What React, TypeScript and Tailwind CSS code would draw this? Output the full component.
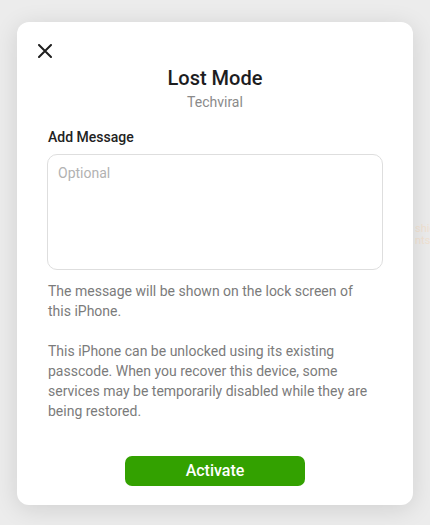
import React from "react";

export default function App() {
  return (
    <div
      className="relative h-[525px] w-[430px] overflow-hidden bg-[#ececec]"
      style={{ fontFamily: "Roboto, 'Noto Sans', sans-serif" }}
    >
      <div className="absolute left-[415px] top-[223px] text-[11px] leading-[12px] text-[#f1e2d2]">
        <div>shic</div>
        <div>nts</div>
      </div>
      <div className="relative pl-[17px] pt-[22px]">
        <div className="h-[483px] w-[396px] rounded-[12px] bg-white shadow-[0_4px_24px_rgba(0,0,0,0.12)]">
          <div className="pl-[16px] pt-[17px]">
            <button className="flex h-6 w-6 items-center justify-center">
              <svg width="14" height="14" viewBox="0 0 14 14" fill="none">
                <path d="M1 1L13 13M13 1L1 13" stroke="#1f1f1f" strokeWidth="2" strokeLinecap="round" />
              </svg>
            </button>
          </div>
          <div className="mt-[3px] text-center text-[20px] font-medium leading-[24px] text-[#1d1d1f]">
            Lost Mode
          </div>
          <div className="mt-[2px] text-center text-[14px] leading-[20px] text-[#8a8a8a]">Techviral</div>
          <div className="px-[30px]">
            <div className="mt-[15px] pl-[1px] text-[14px] font-medium leading-[20px] text-[#222]">Add Message</div>
            <textarea
              placeholder="Optional"
              className="mt-[7px] block h-[116px] w-full resize-none rounded-[10px] border border-[#dedede] px-[10px] py-[8px] text-[14px] leading-[20px] text-[#222] outline-none placeholder:text-[#b2b2b2]"
            />
            <p className="mt-[11px] pl-[1px] pr-[4px] text-[14px] leading-[20px] text-[#7b7b7b]">
              The message will be shown on the lock screen of this iPhone.
            </p>
            <p className="mt-[20px] pl-[1px] pr-[4px] text-[14px] leading-[20px] text-[#7b7b7b]">
              This iPhone can be unlocked using its existing passcode. When you recover this device, some services may be
              temporarily disabled while they are being restored.
            </p>
            <div className="mt-[35px] flex justify-center">
              <button className="h-[30px] w-[180px] rounded-[7px] bg-[#33a100] text-[16px] font-medium leading-[30px] text-white">
                Activate
              </button>
            </div>
          </div>
        </div>
      </div>
    </div>
  );
}
